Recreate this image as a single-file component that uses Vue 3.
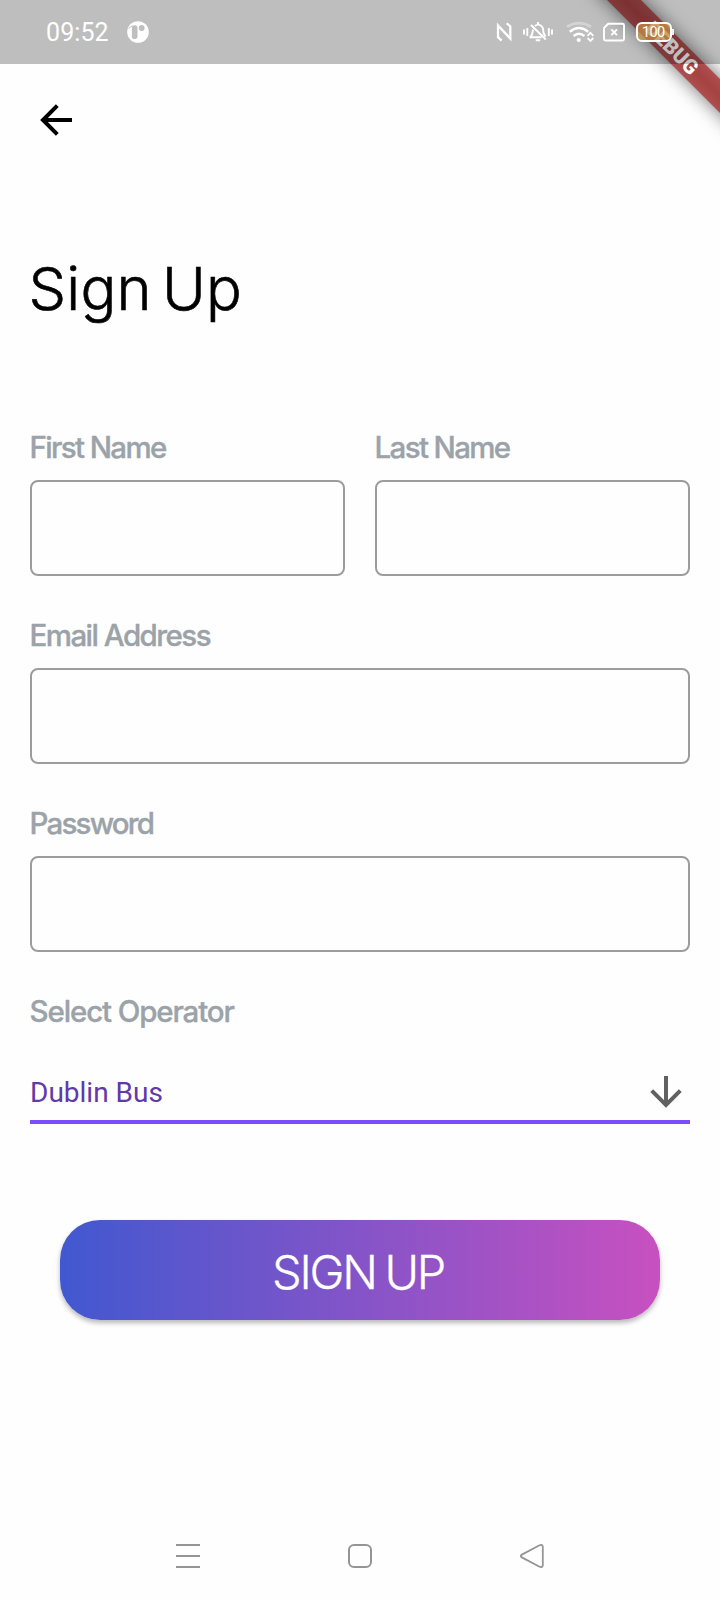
<script setup>
import { ref } from 'vue'

const firstName = ref('')
const lastName = ref('')
const email = ref('')
const password = ref('')
const operator = ref('Dublin Bus')
</script>

<template>
  <div class="screen">
    <div class="banner-clip"><div class="banner">DEBUG</div></div>

    <header class="status">
      <span class="clock">09:52</span>
      <svg class="notif" width="22" height="22" viewBox="0 0 22 22">
        <circle cx="11" cy="11" r="10.8" fill="#fff" />
        <rect x="4.9" y="4.3" width="5.6" height="13.8" rx="2.8" fill="#bfbfbf" />
        <circle cx="14.7" cy="7" r="2.9" fill="#bfbfbf" />
        <path d="M1.5 7.5 L5.5 4.5" stroke="#bfbfbf" stroke-width="1" />
      </svg>
      <svg class="tray" width="184" height="32" viewBox="490 16 184 32" fill="none" stroke="#fff" stroke-width="1.9">
        <path d="M501.6 40.6 L498 37.2 V25.4 L510.3 38.6 V26.2 L506.6 23.4" stroke-width="2.3" />
        <path d="M524 29.5 V34.5 M527.3 28 V36 M548.8 28 V36 M552 29.5 V34.5" />
        <path d="M529.5 37.3 H541.5 M530.5 37 C533 34 532.5 32 533 29.5 M534.8 26 C539 22.6 543.5 26.5 543.2 30.5 C543.2 33 543.8 34.8 545.5 36.5 M531 25 L545.8 39.5 M538 22 V24.5 M535.8 40.2 H540.2" />
        <path d="M567 26.8 Q579 19.6 591 26.8" opacity=".35" stroke-width="2.8" />
        <path d="M569.8 31.8 Q579 24.2 588.2 31.8 M573.6 36 Q579 31.5 584.4 36" stroke-width="2.6" />
        <circle cx="578.7" cy="40" r="2.1" fill="#fff" stroke="none" />
        <path d="M587.5 35.8 L590.4 32.7 L593.3 35.8 M587.5 38 L590.4 41 L593.3 38" stroke-width="1.8" />
        <path d="M608.2 23.8 H622.5 Q624 23.8 624 25.3 V39 Q624 40.5 622.5 40.5 H605.5 Q604 40.5 604 39 V28 Z" />
        <path d="M611.3 29.4 L617 35.1 M617 29.4 L611.3 35.1" stroke-width="2" />
        <rect x="637" y="23" width="34" height="18" rx="5" fill="#d09a45" fill-opacity=".66" stroke-width="2" />
        <path d="M673 29 V35" stroke-width="1.8" />
        <text x="653.3" y="37" text-anchor="middle" class="battery" fill="#fff" stroke="none">100</text>
      </svg>
    </header>

    <nav class="appbar">
      <svg width="32" height="32" viewBox="0 0 32 32" fill="none" stroke="#000" stroke-width="4">
        <path d="M32 16 H3.5" />
        <path d="M17.3 1.7 L3 16 L17.3 30.3" />
      </svg>
    </nav>

    <h1 class="title">Sign Up</h1>

    <form class="form" @submit.prevent>
      <div class="row">
        <label class="field"><span class="first">First Name</span><input v-model="firstName" /></label>
        <label class="field"><span class="last">Last Name</span><input v-model="lastName" /></label>
      </div>
      <label class="field"><span class="email">Email Address</span><input v-model="email" /></label>
      <label class="field"><span class="password">Password</span><input v-model="password" type="password" /></label>
      <div class="operator">
        <span class="caption">Select Operator</span>
        <div class="select">
          <span class="value">{{ operator }}</span>
          <svg width="32" height="32" viewBox="0 0 32 32" fill="none" stroke="#616161" stroke-width="4">
            <path d="M16 0 V28.5" />
            <path d="M1.7 14.7 L16 29 L30.3 14.7" />
          </svg>
        </div>
      </div>
      <button class="submit">SIGN UP</button>
    </form>

    <footer class="navbar">
      <svg width="24" height="26" viewBox="0 0 24 26" stroke="#959595" stroke-width="2">
        <path d="M0 2 H24 M0 13 H24 M0 24 H24" />
      </svg>
      <svg width="24" height="26" viewBox="0 0 24 26" fill="none" stroke="#959595" stroke-width="2">
        <rect x="1" y="2" width="22" height="22" rx="5" />
      </svg>
      <svg width="24" height="26" viewBox="0 0 24 26" fill="none" stroke="#959595" stroke-width="1.8">
        <path d="M1.9 11.6 L19.5 2.3 Q22.8 1 22.8 4 V22 Q22.8 25 19.5 23.7 L1.9 14.4 Q-.2 13 1.9 11.6 Z" />
      </svg>
    </footer>
  </div>
</template>

<style>
body { margin: 0; background: #fefefe; }
</style>

<style scoped>
.screen {
  position: relative;
  display: flex;
  flex-direction: column;
  width: 720px;
  height: 1600px;
  overflow: hidden;
  background: #fefefe;
  font-family: Inter, "Liberation Sans", sans-serif;
}
.banner-clip {
  position: absolute;
  top: 0;
  right: 0;
  width: 200px;
  height: 200px;
  overflow: hidden;
}
.banner {
  position: absolute;
  left: 52px;
  top: 36px;
  width: 200px;
  height: 24px;
  transform: rotate(45deg);
  background: linear-gradient(#ae4e4e, #a54242 50%, #ae4e4e);
  box-shadow: 0 0 18px 1px rgba(0, 0, 0, .5);
  color: #fff;
  font: 900 20.4px/24px Roboto, sans-serif;
  text-align: center;
}
.status {
  position: relative;
  display: flex;
  align-items: center;
  height: 64px;
  box-sizing: border-box;
  padding: 0 46px;
  background: rgba(0, 0, 0, .25);
}
.clock {
  width: 81px;
  padding-top: 2px;
  color: #fff;
  font: 400 25px/30px Roboto, sans-serif;
  letter-spacing: .1px;
}
.tray { margin-left: auto; }
.battery { font: 400 14.5px Roboto, sans-serif; letter-spacing: -.6px; }
.appbar {
  display: flex;
  align-items: center;
  height: 112px;
  padding-left: 40px;
}
.title {
  margin: 72px 0 0 28.5px;
  font-size: 59.5px;
  line-height: 80px;
  font-weight: 300;
  letter-spacing: .2px;
  word-spacing: -6.5px;
  -webkit-text-stroke: .6px #000;
  color: #000;
}
.form {
  display: flex;
  flex-direction: column;
  gap: 42px;
  margin: 102px 30px 0;
}
.row { display: grid; grid-template-columns: 1fr 1fr; gap: 30px; }
.field { display: flex; flex-direction: column; }
.field span, .caption {
  height: 50px;
  margin-left: -.5px;
  font-size: 29.5px;
  line-height: 35px;
  font-weight: 500;
  letter-spacing: -1.13px;
  -webkit-text-stroke: .35px #9ba3a9;
  color: #9ba3a9;
  white-space: nowrap;
}
.field .first, .field .last { letter-spacing: -1.64px; }
.field .email { letter-spacing: -1.54px; }
.field .password { letter-spacing: -1.8px; }
.field input {
  width: 100%;
  height: 96px;
  box-sizing: border-box;
  border: 2px solid #9c9c9c;
  border-radius: 8px;
  background: transparent;
  outline: none;
  padding: 0 20px;
  font-size: 28px;
}
.operator { display: flex; flex-direction: column; }
.select {
  display: flex;
  justify-content: space-between;
  align-items: flex-end;
  height: 80px;
  box-sizing: border-box;
  padding: 0 8px 12px 0;
  border-bottom: 4px solid #7c4dff;
  color: #6139a9;
  font: 400 28px/32px Roboto, sans-serif;
}
.value { margin-bottom: -1px; }
.submit {
  height: 100px;
  margin: 54px 30px 0;
  padding: 4px 4px 0 0;
  border: 0;
  border-radius: 40px;
  background: linear-gradient(90deg, #4158d0, #c850c0);
  box-shadow: 0 3px 5px rgba(0, 0, 0, .28);
  color: #fff;
  font: 300 47px/56px Inter, sans-serif;
  letter-spacing: -2.3px;
  word-spacing: -2px;
  -webkit-text-stroke: .3px #fff;
}
.navbar {
  display: flex;
  justify-content: space-between;
  align-items: center;
  margin: auto 176px 31px;
}
</style>
